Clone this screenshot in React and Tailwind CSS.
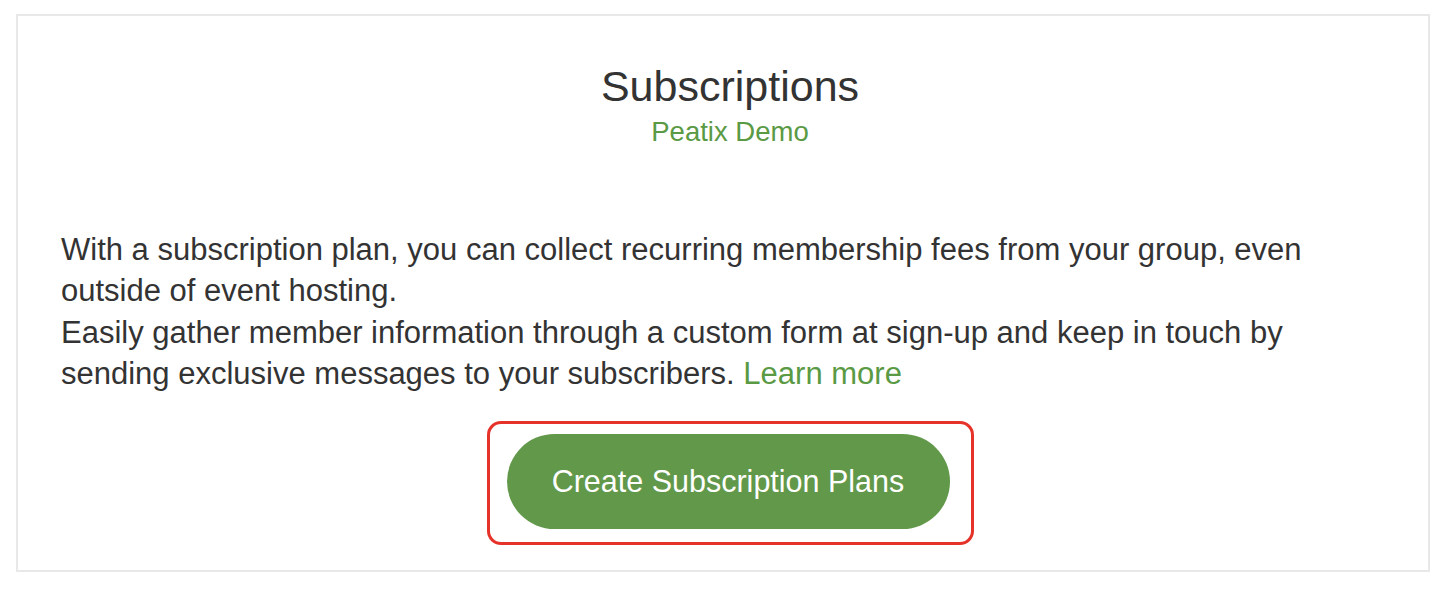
export default function App() {
  return (
    <div className="bg-white pt-[14px] pl-4 pr-[18px] pb-[21px] font-['Liberation_Sans',Arial,sans-serif]">
      <div className="border-2 border-[#e8e8e8] pt-[46px] pb-[25px] pl-[43px] pr-[29px]">
        <h1 className="text-center text-[43px] leading-[49px] text-[#333333]">Subscriptions</h1>
        <p className="mt-[3px] text-center text-[27.5px] leading-[36px] text-[#5a9a44]">Peatix Demo</p>
        <p className="mt-[79px] text-[31px] leading-[41.3px] text-[#333333]">
          With a subscription plan, you can collect recurring membership fees from your group, even<br />
          outside of event hosting.<br />
          Easily gather member information through a custom form at sign-up and keep in touch by<br />
          sending exclusive messages to your subscribers.{" "}
          <a href="#" className="text-[#5a9a44]">Learn more</a>
        </p>
        <div className="mt-[27px] flex justify-center">
          <div className="rounded-[14px] border-[3px] border-[#e6332a] pt-[10px] pb-[13px] pl-[17px] pr-[21px]">
            <button className="flex h-[95px] w-[443px] items-center justify-center rounded-full bg-[#62984a] text-[30.5px] text-white">
              Create Subscription Plans
            </button>
          </div>
        </div>
      </div>
    </div>
  );
}
